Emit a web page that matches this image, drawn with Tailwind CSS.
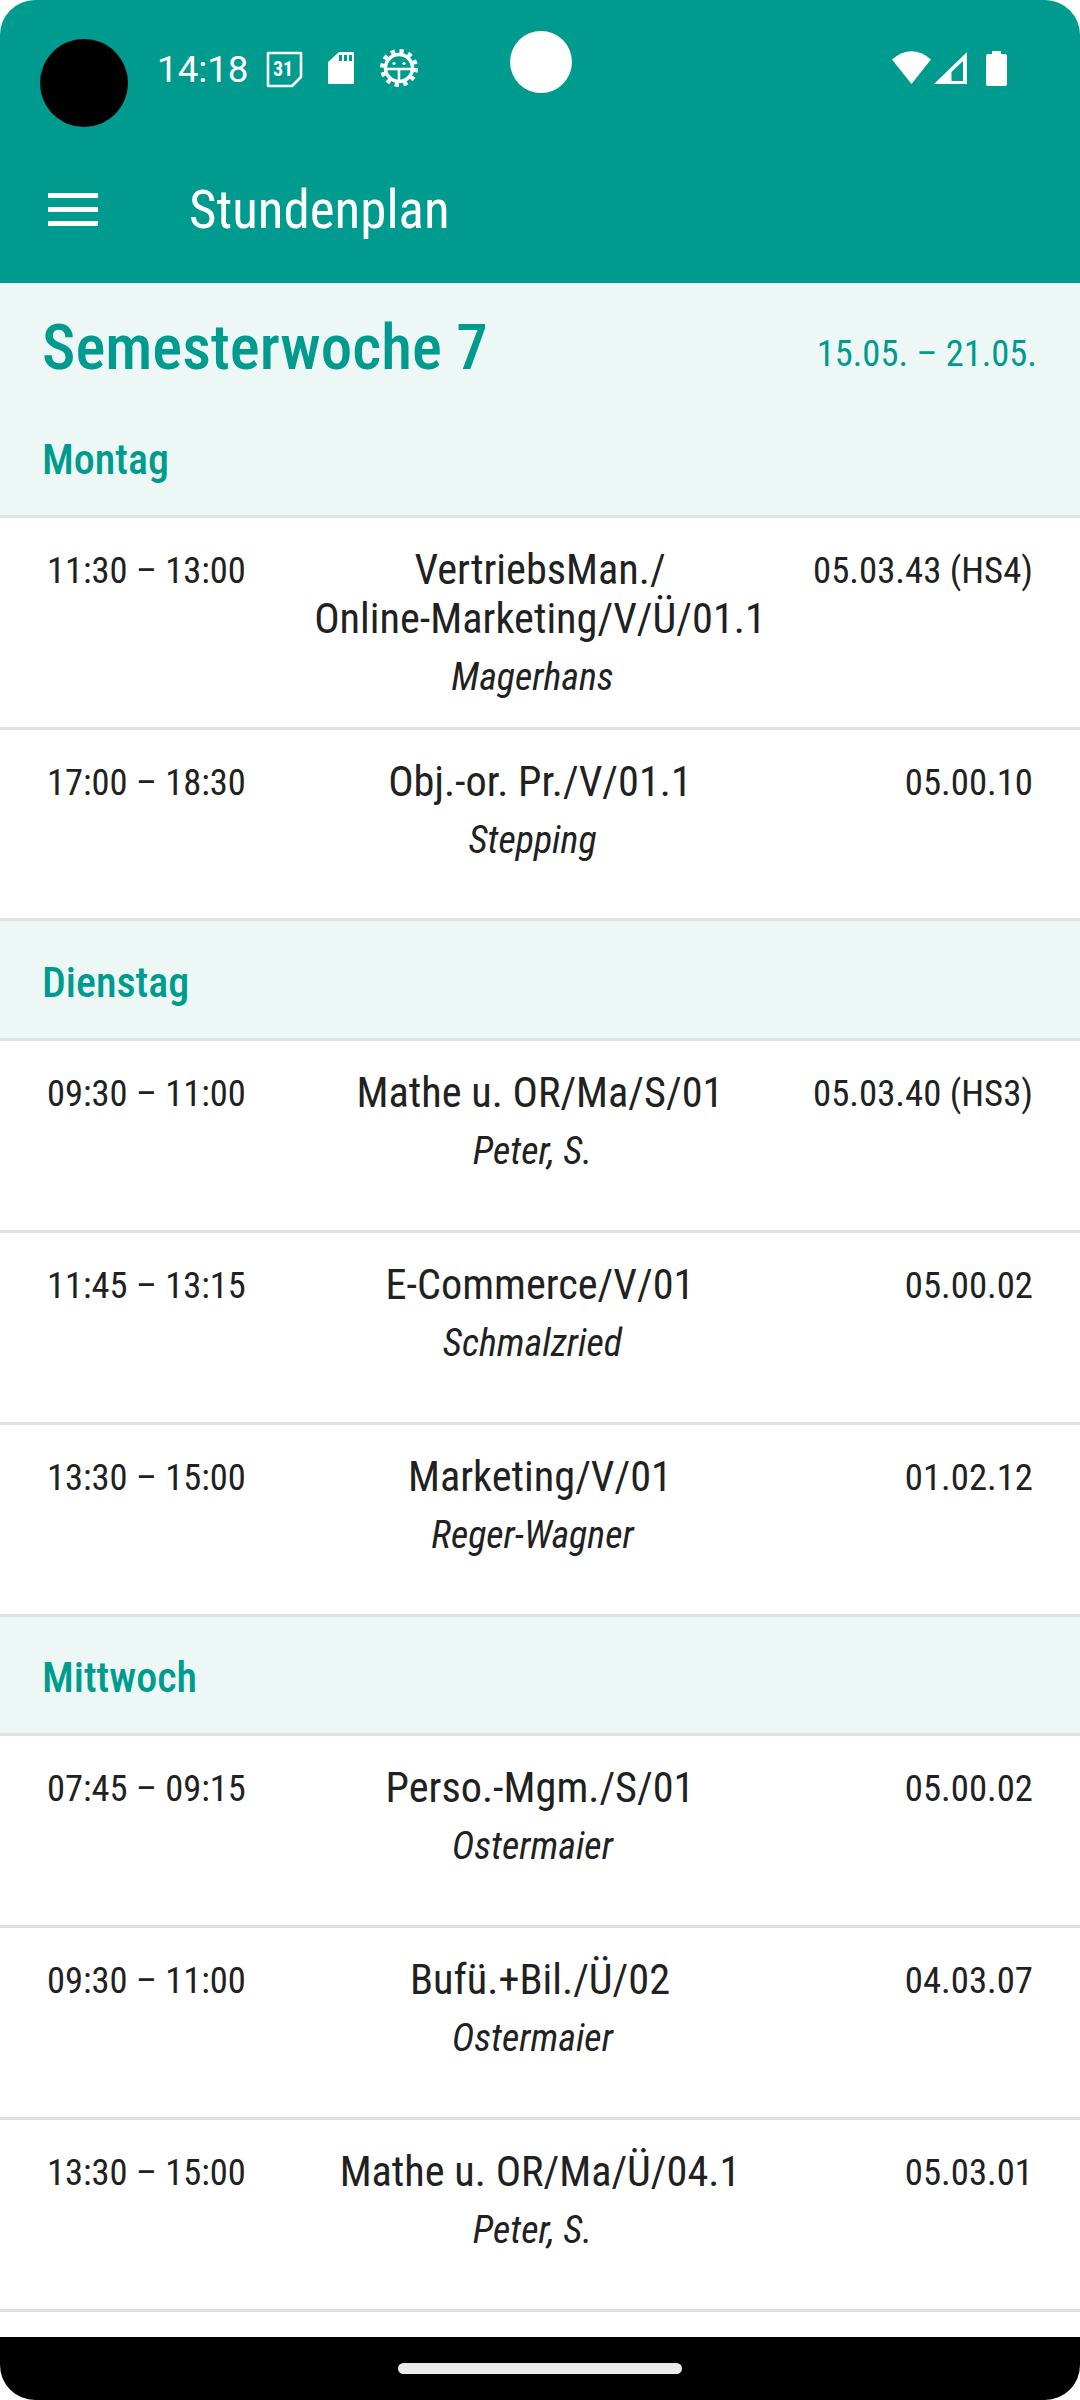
<!DOCTYPE html>
<html lang="de">
<head>
    <meta charset="UTF-8">
    <meta name="viewport" content="width=device-width, initial-scale=1.0">
    <title>Stundenplan</title>
    <script src="https://cdn.jsdelivr.net/npm/@tailwindcss/browser@4"></script>
</head>
<body class="bg-white">
    <div class="relative h-[2400px] w-[1080px] overflow-hidden rounded-[35px] bg-white font-['Roboto',sans-serif] [font-stretch:75%]">

        <!-- Status bar + toolbar -->
        <header class="relative h-[283px] bg-[#009b8f] text-white">
            <div class="absolute left-[40px] top-[39px] h-[88px] w-[88px] rounded-full bg-black"></div>
            <div class="absolute left-[510px] top-[31px] h-[62px] w-[62px] rounded-full bg-white"></div>

            <div class="flex h-[136px] items-start pl-[157px] pr-[73px] pt-[47px]">
                <span class="mt-[2px] text-[36.75px] leading-[41px] [font-stretch:100%]">14:18</span>
                <svg class="ml-[17px] mt-[4px] h-[37px] w-[37px]" viewBox="0 0 37 37">
                    <path d="M2 2H35V26L26 35H2Z" fill="none" stroke="white" stroke-width="2.6" stroke-linejoin="round"/>
                    <text x="17" y="25" text-anchor="middle" font-size="20" font-weight="700" fill="white" font-family="Roboto">31</text>
                </svg>
                <svg class="ml-[25px] mt-[5px] h-[32px] w-[26px]" viewBox="0 0 26 32">
                    <path fill="white" fill-rule="evenodd" d="M11 0H25Q26 0 26 1V31Q26 32 25 32H1Q0 32 0 31V10ZM11 3V9H14V3ZM16 3V9H19V3ZM21 3V9H24V3Z"/>
                </svg>
                <svg class="ml-[26px] mt-[2px] h-[38px] w-[38px]" viewBox="0 0 38 38">
                    <circle cx="19" cy="19" r="13.5" fill="none" stroke="white" stroke-width="3.5"/>
                    <circle cx="19" cy="19" r="16" fill="none" stroke="white" stroke-width="6" stroke-dasharray="4 4.38"/>
                    <path d="M6 20H32M19 20V32" stroke="white" stroke-width="2.6" fill="none"/>
                    <circle cx="14" cy="14.500" r="1.6" fill="white"/>
                    <circle cx="24" cy="14.500" r="1.6" fill="white"/>
                </svg>
                <div class="ml-auto flex items-start">
                    <svg class="mt-[4px] h-[33px] w-[39px]" viewBox="0 0 39 33">
                        <path fill="white" d="M0 8.500Q19.500 -8 39 8.500L19.500 33Z"/>
                    </svg>
                    <svg class="ml-[3px] mt-[5px] h-[32px] w-[33px]" viewBox="0 0 33 32">
                        <path fill="white" fill-rule="evenodd" d="M33 0V32H0ZM29 9L17.500 20V29H29Z"/>
                    </svg>
                    <svg class="ml-[19px] mt-[4px] h-[35px] w-[21px]" viewBox="0 0 21 35">
                        <path fill="white" d="M6 0H15V3H19Q21 3 21 5V33Q21 35 19 35H2Q0 35 0 33V5Q0 3 2 3H6Z"/>
                    </svg>
                </div>
            </div>

            <div class="flex h-[147px] items-center pl-[48px]">
                <div class="flex w-[50px] flex-col gap-[9px]">
                    <span class="h-[5px] bg-white"></span>
                    <span class="h-[5px] bg-white"></span>
                    <span class="h-[5px] bg-white"></span>
                </div>
                <h1 class="ml-[91px] text-[53px] leading-[62px]">Stundenplan</h1>
            </div>
        </header>

        <!-- Week header -->
        <section class="flex h-[117px] items-start justify-between bg-[#edf7f6] pl-[42px] pr-[43px] pt-[27px] text-[#009b8f]">
            <h2 class="text-[63px] font-medium leading-[75px]">Semesterwoche 7</h2>
            <span class="mt-[23px] text-[36.5px] leading-[42px]">15.05. – 21.05.</span>
        </section>

        <!-- Montag -->
        <div class="h-[118px] border-b-[3px] border-[#dfe3e2] bg-[#edf7f6] pl-[42px] pt-[36px] text-[42px] font-medium leading-[48px] text-[#009b8f]">Montag</div>
        <div class="flex h-[212px] border-b-[3px] border-[#e0e0e0] pl-[47px] pr-[47px] pt-[32px] text-[#212121]">
            <span class="w-[230px] shrink-0 text-[36.5px] leading-[42px]">11:30 – 13:00</span>
            <div class="-mt-[5px] flex-1 text-center">
                <p class="text-[42.3px] leading-[49px]">VertriebsMan./<br>Online-Marketing/V/Ü/01.1</p>
                <p class="mt-[13px] pr-[15px] text-[38px] italic leading-[42px]">Magerhans</p>
            </div>
            <span class="w-[230px] shrink-0 text-right text-[36.75px] leading-[42px]">05.03.43 (HS4)</span>
        </div>
        <div class="flex h-[191px] border-b-[3px] border-[#e0e0e0] pl-[47px] pr-[47px] pt-[32px] text-[#212121]">
            <span class="w-[230px] shrink-0 text-[36.5px] leading-[42px]">17:00 – 18:30</span>
            <div class="-mt-[5px] flex-1 text-center">
                <p class="text-[42.3px] leading-[49px]">Obj.-or. Pr./V/01.1</p>
                <p class="mt-[13px] pr-[15px] text-[38px] italic leading-[42px]">Stepping</p>
            </div>
            <span class="w-[230px] shrink-0 text-right text-[36.75px] leading-[42px]">05.00.10</span>
        </div>

        <!-- Dienstag -->
        <div class="flex h-[120px] items-center border-b-[3px] border-[#dfe3e2] bg-[#edf7f6] pl-[42px] pt-[6px] text-[42px] font-medium leading-[48px] text-[#009b8f]">Dienstag</div>
        <div class="flex h-[192px] border-b-[3px] border-[#e0e0e0] pl-[47px] pr-[47px] pt-[32px] text-[#212121]">
            <span class="w-[230px] shrink-0 text-[36.5px] leading-[42px]">09:30 – 11:00</span>
            <div class="-mt-[5px] flex-1 text-center">
                <p class="text-[42.3px] leading-[49px]">Mathe u. OR/Ma/S/01</p>
                <p class="mt-[13px] pr-[15px] text-[38px] italic leading-[42px]">Peter, S.</p>
            </div>
            <span class="w-[230px] shrink-0 text-right text-[36.75px] leading-[42px]">05.03.40 (HS3)</span>
        </div>
        <div class="flex h-[192px] border-b-[3px] border-[#e0e0e0] pl-[47px] pr-[47px] pt-[32px] text-[#212121]">
            <span class="w-[230px] shrink-0 text-[36.5px] leading-[42px]">11:45 – 13:15</span>
            <div class="-mt-[5px] flex-1 text-center">
                <p class="text-[42.3px] leading-[49px]">E-Commerce/V/01</p>
                <p class="mt-[13px] pr-[15px] text-[38px] italic leading-[42px]">Schmalzried</p>
            </div>
            <span class="w-[230px] shrink-0 text-right text-[36.75px] leading-[42px]">05.00.02</span>
        </div>
        <div class="flex h-[192px] border-b-[3px] border-[#e0e0e0] pl-[47px] pr-[47px] pt-[32px] text-[#212121]">
            <span class="w-[230px] shrink-0 text-[36.5px] leading-[42px]">13:30 – 15:00</span>
            <div class="-mt-[5px] flex-1 text-center">
                <p class="text-[42.3px] leading-[49px]">Marketing/V/01</p>
                <p class="mt-[13px] pr-[15px] text-[38px] italic leading-[42px]">Reger-Wagner</p>
            </div>
            <span class="w-[230px] shrink-0 text-right text-[36.75px] leading-[42px]">01.02.12</span>
        </div>

        <!-- Mittwoch -->
        <div class="flex h-[119px] items-center border-b-[3px] border-[#dfe3e2] bg-[#edf7f6] pl-[42px] pt-[6px] text-[42px] font-medium leading-[48px] text-[#009b8f]">Mittwoch</div>
        <div class="flex h-[192px] border-b-[3px] border-[#e0e0e0] pl-[47px] pr-[47px] pt-[32px] text-[#212121]">
            <span class="w-[230px] shrink-0 text-[36.5px] leading-[42px]">07:45 – 09:15</span>
            <div class="-mt-[5px] flex-1 text-center">
                <p class="text-[42.3px] leading-[49px]">Perso.-Mgm./S/01</p>
                <p class="mt-[13px] pr-[15px] text-[38px] italic leading-[42px]">Ostermaier</p>
            </div>
            <span class="w-[230px] shrink-0 text-right text-[36.75px] leading-[42px]">05.00.02</span>
        </div>
        <div class="flex h-[192px] border-b-[3px] border-[#e0e0e0] pl-[47px] pr-[47px] pt-[32px] text-[#212121]">
            <span class="w-[230px] shrink-0 text-[36.5px] leading-[42px]">09:30 – 11:00</span>
            <div class="-mt-[5px] flex-1 text-center">
                <p class="text-[42.3px] leading-[49px]">Bufü.+Bil./Ü/02</p>
                <p class="mt-[13px] pr-[15px] text-[38px] italic leading-[42px]">Ostermaier</p>
            </div>
            <span class="w-[230px] shrink-0 text-right text-[36.75px] leading-[42px]">04.03.07</span>
        </div>
        <div class="flex h-[192px] border-b-[3px] border-[#e0e0e0] pl-[47px] pr-[47px] pt-[32px] text-[#212121]">
            <span class="w-[230px] shrink-0 text-[36.5px] leading-[42px]">13:30 – 15:00</span>
            <div class="-mt-[5px] flex-1 text-center">
                <p class="text-[42.3px] leading-[49px]">Mathe u. OR/Ma/Ü/04.1</p>
                <p class="mt-[13px] pr-[15px] text-[38px] italic leading-[42px]">Peter, S.</p>
            </div>
            <span class="w-[230px] shrink-0 text-right text-[36.75px] leading-[42px]">05.03.01</span>
        </div>

        <!-- Navigation bar -->
        <div class="absolute bottom-0 left-0 right-0 flex h-[63px] items-start justify-center bg-black pt-[26px]">
            <span class="h-[11px] w-[284px] rounded-full bg-[#ebebeb]"></span>
        </div>
    </div>
</body>
</html>
